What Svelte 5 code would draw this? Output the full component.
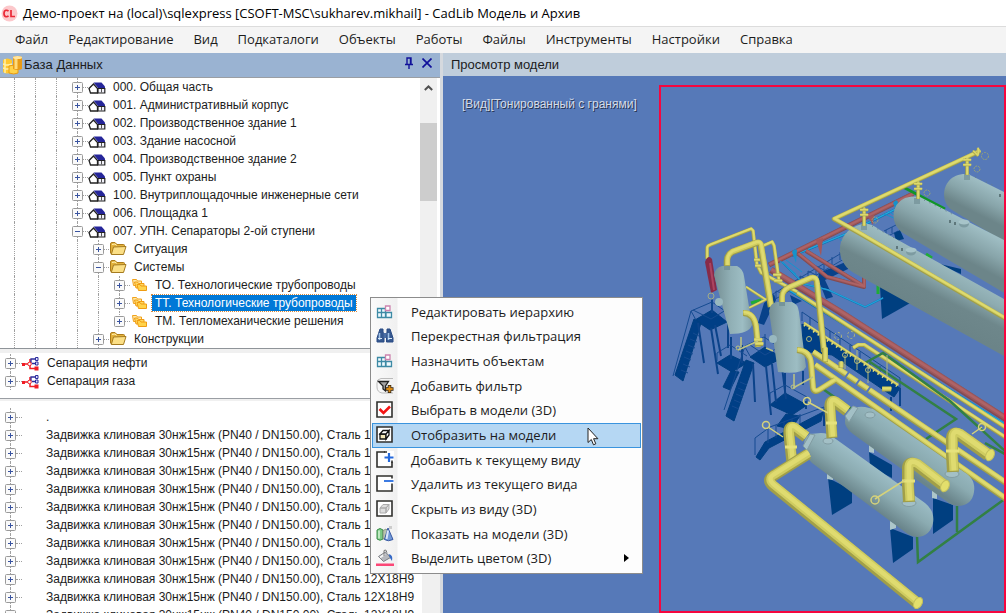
<script>
  const menus = ['Файл', 'Редактирование', 'Вид', 'Подкаталоги', 'Объекты', 'Работы', 'Файлы', 'Инструменты', 'Настройки', 'Справка'];

  const house = (text, open = false) => ({ text, icon: 'house', guides: 3, open });
  const tree = [
    house('000. Общая часть'),
    house('001. Административный корпус'),
    house('002. Производственное здание 1'),
    house('003. Здание насосной'),
    house('004. Производственное здание 2'),
    house('005. Пункт охраны'),
    house('100. Внутриплощадочные инженерные сети'),
    house('006. Площадка 1'),
    house('007. УПН. Сепараторы 2-ой ступени', true),
    { text: 'Ситуация', icon: 'folder', guides: 4 },
    { text: 'Системы', icon: 'folder', guides: 4, open: true },
    { text: 'ТО. Технологические трубопроводы', icon: 'stack', guides: 5 },
    { text: 'ТТ. Технологические трубопроводы', icon: 'stack', guides: 5, selected: true },
    { text: 'ТМ. Тепломеханические решения', icon: 'stack', guides: 5, last: true },
    { text: 'Конструкции', icon: 'folder', guides: 4 }
  ];
  const systems = ['Сепарация нефти', 'Сепарация газа'];
  const valve = 'Задвижка клиновая 30нж15нж (PN40 / DN150.00), Сталь 12Х18Н9';
  const parts = ['.', ...Array(11).fill(valve)];

  const actions = [
    ['grid', 'Редактировать иерархию'],
    ['binoculars', 'Перекрестная фильтрация'],
    ['grid', 'Назначить объектам'],
    ['filter', 'Добавить фильтр'],
    ['check', 'Выбрать в модели (3D)'],
    ['cube', 'Отобразить на модели'],
    ['plus', 'Добавить к текущему виду'],
    ['minus', 'Удалить из текущего вида'],
    ['ghost', 'Скрыть из виду (3D)'],
    ['shapes', 'Показать на модели (3D)'],
    ['bucket', 'Выделить цветом (3D)']
  ];
  const active = 'cube';

  const tones = {
    yellow: ['#a19f48', '#cfcc60', '#dfdb70'],
    red: ['#844a50', '#9c585c', '#ae6366'],
    cyan: ['#0d6fae', '#1593cf', '#2aa9dc'],
    green: ['#256e36', '#3a8244', '#4a9150']
  };
</script>

{#snippet pipe(d, w, tone = 'yellow')}
  <g fill="none" stroke-linejoin="round">
    <path {d} stroke={tones[tone][0]} stroke-width={w} />
    <path {d} stroke={tones[tone][1]} stroke-width={w * 0.75} transform="translate({w * 0.08} {-w * 0.1})" />
    <path {d} stroke={tones[tone][2]} stroke-width={w * 0.4} transform="translate({w * 0.08} {-w * 0.14})" />
  </g>
{/snippet}

{#snippet glyph(name)}
  <svg class="glyph" viewBox="0 0 18 18" aria-hidden="true">
    {#if name === 'house'}
      <path d="M1 10.500 5.500 6l4 4.500V15H2.500z" fill="#fff" stroke="#222" stroke-width="1.300" />
      <path d="M5.500 4.500h8L17 8.500v2h-6.500z" fill="#26269a" />
      <path d="M10 10.500h6.800V15H10z" fill="#f2f2fa" stroke="#222" stroke-width="1.200" />
      <path d="M13.500 11v3.500" stroke="#555" />
    {:else if name === 'folder'}
      <path d="M1.500 13V4q0-1.500 1.500-1.500h3L8 4.500h6.500q1 0 1 1V8L14 14H2.500z" fill="#e3b23c" stroke="#ad7c1b" />
      <path d="m4.500 7 12.500-.5-2.500 8H2.300z" fill="#fbdf86" stroke="#a57b20" />
      <path d="m3 4.500 3-.5 1.500 1.500" fill="none" stroke="#fff0b0" />
    {:else if name === 'stack'}
      <path d="M2.500 3.500h4l1 1.500h4v4.500h-8z" fill="#ffe9a8" stroke="#f0a21c" />
      <path d="M4.500 6h3l1 1.500H14v4.500H6z" fill="#ffd860" stroke="#f09c14" />
      <path d="M7 8.500h3l1 1.500h5.500v4.500H8.500z" fill="#ffd34b" stroke="#ef9c12" />
    {:else if name === 'nodes'}
      <path d="M1 10h7M8 5v9.500h5" fill="none" stroke="#f01c24" stroke-width="1.500" />
      <path d="M9 9V5h4M10 9.500h4" fill="none" stroke="#2c2c9c" stroke-width="1.300" />
      <path d="M0 9h3v3H0zM12.500 12.500h4v4h-4z" fill="#f01c24" />
      <circle cx="7.500" cy="10" r="1.800" fill="#fff" stroke="#f01c24" />
      <path d="M13.500 3.500h2.500v3h-2.500zM13.500 8h2.500v3h-2.500z" fill="#dfe1ff" stroke="#2c2c9c" />
    {:else if name === 'grid'}
      <path d="M1.500 5.500h8v9h-8zM1.500 9.500h14v5h-14M5.500 5.500v9M10 9.500v5" fill="#effaff" stroke="#3d8aa5" stroke-width="1.300" />
      <path d="M9.500 3h4.500v4.500H9.500z" fill="#fff" stroke="#cc83ae" stroke-width="1.300" />
    {:else if name === 'binoculars'}
      <path d="M4 2h3v3l1 2.500V15H1v-4zM11 2h3l3 9v4h-6.500V7.500L11 5z" fill="#36588f" stroke="#294a84" />
      <path d="M7.500 6h3v5h-3z" fill="#4b6ea4" />
      <path d="M3.500 6v7M12.500 6v7" stroke="#9fc1e8" stroke-width="1.600" />
      <path d="M2 11.500h4M12 11.500h4" stroke="#dcebfa" />
    {:else if name === 'filter'}
      <path d="M17 1.500H5Q1 2 1 6v4q0 5 5 6h11" fill="none" stroke="#bbb" />
      <path d="M2.500 4.500h10L9.500 9v5L7 12V9z" fill="#a4a4a4" stroke="#222" stroke-width="1.300" />
      <path d="M13.500 8v8M9.500 12h8" stroke="#322413" stroke-width="3.500" />
      <path d="M13.500 8.800v6.400M10.300 12h6.400" stroke="#d98913" stroke-width="2" />
    {:else if name === 'shapes'}
      <path d="M1 5q3-3 6 0v9q-3 2.500-6 0z" fill="#7bc985" stroke="#3c8e4b" />
      <path d="M3 5.500v8" stroke="#d4f5d4" stroke-width="1.500" />
      <path d="M7 5.500 10 4l2 2-3 8H7z" fill="#b9c4ae" stroke="#74816e" stroke-width=".7" />
      <path d="m12 3 5 11.500q-5 2.500-8.500 0z" fill="#7199d8" stroke="#3858a2" />
      <path d="m12 5.500-1.500 8.500" stroke="#dce9fb" stroke-width="2" />
      <path d="M13 1h3v3h-3z" fill="#ccc" />
    {:else if name === 'bucket'}
      <path d="m2.500 7.500 7-4.500 5 5.500-7 4z" fill="#b6b8bd" stroke="#797c82" />
      <path d="M4 8.500 9 5" stroke="#f6f6f6" stroke-width="2" />
      <path d="M8 7V1.500q2-2 3 2" fill="none" stroke="#777" />
      <path d="M12.500 5q5 1 3.500 7l-2-3z" fill="#3569c5" />
      <path d="M0 14.500h18v2.500H0z" fill="#fb4776" />
    {:else}
      <path d="M1 1h15v15H1z" fill="#fff" stroke="#30302d" stroke-width="1.600" />
      {#if name === 'check'}
        <path d="m3.500 8 4 4L14 5.500" fill="none" stroke="#f41414" stroke-width="2.600" />
      {:else if name === 'cube'}
        <path d="M4 8h6v5H4z" fill="#f2e7b8" stroke="#111" stroke-width="1.300" />
        <path d="m4 8 3-3.500h6L10 8zM10 8l3-3.500V9l-3 4z" fill="#fff" stroke="#111" stroke-width="1.300" />
      {:else if name === 'ghost'}
        <path d="M4 8h6v5H4zM4 8l3-3.500h6L10 8zM10 8l3-3.500V9l-3 4z" fill="#ddd" stroke="#aaa" />
      {:else if name === 'plus'}
        <path d="M9 0h9v11H9z" fill="#fff" /><path d="M8 1h3M16 12V9.500" stroke="#30302d" stroke-width="1.600" />
        <path d="M8.500 6.500h9M13 2v9" stroke="#2469dc" stroke-width="2.200" />
      {:else if name === 'minus'}
        <path d="M8.500 3.500h9.500v5H8.500z" fill="#fff" /><path d="M8 6h9.500" stroke="#3d7be2" stroke-width="2" />
      {/if}
    {/if}
  </svg>
{/snippet}

{#snippet expander(label, open)}
  <button class="expander" aria-label={label} aria-expanded={open}>
    <svg viewBox="0 0 11 11" width="11" height="11" aria-hidden="true">
      <rect x=".5" y=".5" width="10" height="10" rx="1" fill="#fafafa" stroke="#9a9a9a" />
      <path d={open ? 'M3 5.500h5' : 'M3 5.500h5M5.500 3v5'} stroke="#3a54a0" />
    </svg>
  </button>
{/snippet}

<div class="app">
  <header class="title">
    <svg width="17" height="17" viewBox="0 0 17 17" aria-hidden="true">
      <circle cx="8.500" cy="8.500" r="8" fill="#fcc8cb" />
      <path d="M7.500 6.300Q6.500 5 4.800 5.300 3 5.800 3 8.500t1.800 3.200q1.700.3 2.700-1M10 5v6.500h4" fill="none" stroke="#ea2836" stroke-width="1.700" />
    </svg>
    <span>Демо-проект на (local)\sqlexpress [CSOFT-MSC\sukharev.mikhail] - CadLib Модель и Архив</span>
  </header>

  <nav class="menubar">
    {#each menus as item}<button>{item}</button>{/each}
  </nav>

  <div class="panes">
    <aside class="database">
      <div class="bar">
        <svg width="20" height="20" viewBox="0 0 20 20" aria-hidden="true">
          <path d="M0 5q4-3 9 0v12q-5 3-9 0z" fill="#ffc72e" />
          <path d="M0 9q4 2 9 0M0 13q4 2 9 0M2 4v14" fill="none" stroke="#fff0a8" stroke-width="1.500" />
          <path d="M6 11q6-2 9 0v7q-4 2-9 0z" fill="#ffd34a" stroke="#e89a10" />
          <path d="M10 2q5-2 9 0v12q-4 2-9 0z" fill="#e99b16" />
          <path d="M13 3v11" stroke="#ffda79" stroke-width="3" />
          <ellipse cx="14.500" cy="2.500" rx="4.500" ry="1.500" fill="#ffe5a0" />
        </svg>
        <h2>База Данных</h2>
        <button class="tool" aria-label="Закрепить">
          <svg width="10" height="12" viewBox="0 0 10 12"><path d="M3 7V1h4v6M6.500 1v6M1 7.500h8M5 8v4" fill="none" stroke="#10109a" stroke-width="1.400" /></svg>
        </button>
        <button class="tool" aria-label="Закрыть">
          <svg width="10" height="10" viewBox="0 0 10 10"><path d="m.5.5 9 9M9.500.5l-9 9" stroke="#10109a" stroke-width="1.700" /></svg>
        </button>
      </div>

      <section class="hierarchy">
        <ul>
          {#each tree as row}
            <li>
              {#each Array(row.guides) as _}
                <i class="guide"></i>
              {/each}
              <span class={['cell', row.last && 'last']}>{@render expander(row.text, !!row.open)}</span>
              {@render glyph(row.icon)}
              <span class={['text', row.selected && 'selected']}>{row.text}</span>
            </li>
          {/each}
        </ul>
        <div class="scroll">
          <button aria-label="Вверх"><svg width="9" height="6" viewBox="0 0 9 6"><path d="m.8 5 3.700-3.500L8.200 5" fill="none" stroke="#505050" stroke-width="2" /></svg></button>
          <div class="thumb"></div>
        </div>
      </section>

      <section class="systems">
        <ul>
          {#each systems as text}
            <li><span class="cell">{@render expander(text, false)}</span>{@render glyph('nodes')}<span class="text">{text}</span></li>
          {/each}
        </ul>
      </section>

      <section class="parts">
        <ul>
          {#each parts as text}
            <li><span class="cell">{@render expander(text, false)}</span><span class="text">{text}</span></li>
          {/each}
        </ul>
        <div class="scroll"></div>
      </section>
    </aside>

    <main>
      <div class="bar"><h2>Просмотр модели</h2></div>
      <div class="viewport">
        <p>[Вид][Тонированный с гранями]</p>
        <div class="frame">
          <svg viewBox="661 87 343 524" preserveAspectRatio="xMinYMin slice" aria-hidden="true">
            <defs>
              <linearGradient id="tank" gradientUnits="userSpaceOnUse" x1="930" y1="250" x2="904" y2="302">
                <stop offset="0" stop-color="#a0bfc5" /><stop offset=".35" stop-color="#8dabb0" /><stop offset=".65" stop-color="#6e878b" /><stop offset="1" stop-color="#6b8488" />
              </linearGradient>
              <linearGradient id="tankB" gradientUnits="userSpaceOnUse" x1="950" y1="212" x2="928" y2="254">
                <stop offset="0" stop-color="#a0bfc5" /><stop offset=".4" stop-color="#88a5aa" /><stop offset=".75" stop-color="#6c8589" />
              </linearGradient>
              <linearGradient id="tankC" gradientUnits="userSpaceOnUse" x1="985" y1="182" x2="966" y2="220">
                <stop offset="0" stop-color="#a0bfc5" /><stop offset=".4" stop-color="#88a5aa" /><stop offset=".75" stop-color="#6c8589" />
              </linearGradient>
              <linearGradient id="drum" gradientUnits="userSpaceOnUse" x1="915" y1="436" x2="893" y2="468">
                <stop offset="0" stop-color="#97b8c0" /><stop offset=".4" stop-color="#8babb1" /><stop offset=".85" stop-color="#6a858b" />
              </linearGradient>
              <linearGradient id="drumQ" gradientUnits="userSpaceOnUse" x1="875" y1="468" x2="852" y2="501">
                <stop offset="0" stop-color="#9bbcc4" /><stop offset=".4" stop-color="#8babb1" /><stop offset=".85" stop-color="#6a858b" />
              </linearGradient>
              <linearGradient id="column">
                <stop offset="0" stop-color="#748e93" /><stop offset=".45" stop-color="#91b0b6" /><stop offset=".75" stop-color="#9dbdc3" /><stop offset="1" stop-color="#84a1a7" />
              </linearGradient>
            </defs>

            <!-- pipe rack behind the tanks -->
            <g fill="none" stroke="#1c4f95" stroke-width="1">
              <path d="M768 297 845 251M772 301l72-42M776 298v-7m8 3v-8m8 4v-9m8 4v-9m8 4v-9m8 4v-9m8 4v-8m8 3v-8m8 3v-8M776 291l8 3m0-8 8 4m0-9 8 4m0-9 8 4m0-9 8 4m0-9 8 4m0-8 8 3M884 238l14-7m-14 0 14-7m-12 12v-6m6 3v-6" />
            </g>
            <path d="m819 273 29-12v8l-23 11 8 17-7 2-8-20zM790 295l12 6-9 4zM764 303l10-9 2 6-12 25-6-2z" fill="#08428a" />
            <path d="m880 287 19 1 13 14-30 17z" fill="#003f80" />
            <path d="m940 264 21 5v5l-20-9zM894 233l6-3 4 9-8 2z" fill="#003f80" />
            {@render pipe('M782 262l22 22 24 6 37 17 18-9', 1.6, 'cyan')}
            {@render pipe('M792 256l54-22 52-26', 2.2, 'cyan')}
            {@render pipe('M797 253l30 24 37 10v-13M806 251l57 35', 4, 'red')}
            {@render pipe('M769 265 913 194', 5, 'red')}
            <path d="M816 240l7-2-2 18zM868 217l6-2-1 10z" fill="#a3575a" />
            <path d="M792 252q2-4 5-2l-1 13zM893 203q3-5 5-1l-2 8z" fill="#1492cb" />
            <path d="M780 261l16 13M786 260l16 12M838 238l8 6M884 214l10 4M888 211l8 5" stroke="#1593cf" fill="none" />
            <path d="M903 187l42 22" stroke="#119528" stroke-width="3" />
            <path d="M878 282v12M926 254l6 4M751 303l10-3" stroke="#20ac36" stroke-width="3" />
            {@render pipe('M771 270l69 42 166 107', 6.5, 'red')}
            {@render pipe('M790 291 1006 425', 2.4, 'cyan')}

            <!-- storage tanks -->
            <path d="M968 174 1006 193v50l-54-33c-14-9-10-38 16-36z" fill="url(#tankC)" />
            <path d="M920 197 1006 241v53l-103-61c-17-11-11-41 17-36z" fill="url(#tankB)" />
            <path d="M862 224q7-2 18 6L1006 300v57L854 273c-20-11-20-42 8-49z" fill="url(#tank)" />
            <g fill="#7d9ba1">
              <ellipse cx="911" cy="252" rx="5" ry="3.500" /><ellipse cx="964" cy="224" rx="5" ry="3.500" />
              <ellipse cx="911" cy="250" rx="5.500" ry="2.500" fill="#a7c4c9" /><ellipse cx="964" cy="222" rx="5.500" ry="2.500" fill="#a7c4c9" />
              <path d="M861 224h6v6h-6zM914 198h6v6h-6zM964 174h6v6h-6z" />
            </g>
            <path d="M897 246v3m5-1v3m48-31v3m5-1v3m45-31v3" stroke="#5e777b" stroke-width="2" />
            <g stroke="#66808a" stroke-dasharray="1 5"><path d="M872 226l28 15M924 200l28 14M975 177l20 9" /></g>
            {@render pipe('M980 151 834 219l25 14 147 86', 4.500)}
            {@render pipe('M864 208v18M918 182v17M967 158v17', 3.500)}
            {@render pipe('M860 210h8M860 215h8M914 184h8M914 189h8M963 160h8M963 165h8M973 151l5 5M978 148v7', 2.500)}
            <g fill="none" stroke="#97a477"><circle cx="985" cy="156" r="3.500" stroke-dasharray="2 1" /><circle cx="977" cy="169" r="3" stroke-dasharray="2 1" /><circle cx="927" cy="193" r="3" stroke-dasharray="2 1" /><circle cx="875" cy="220" r="3" stroke-dasharray="2 1" /></g>

            <!-- stairs and service platforms -->
            <g fill="#003f86" stroke="#003f80">
              <path d="m695 320 17-10 15 12-17 8zM750 357l15-10 17 11-17 9zM717 363l13-8 17 8-15 9zM770 405l15-12 22 12-15 10zM802 324l98 64-6 9-62-42-29-4z" />
              <path d="m694 319-19 56 8 6 18-58zM746 360l-20 56 8 5 20-58zM731 371l-8 16 7 3 9-18zM765 442l58-30-2 9-52 27-9 12-4-3z" />
              <path d="m786 414-9 12 14 3 9-13z" />
            </g>
            <g fill="none" stroke="#0b438a" stroke-width="2">
              <path d="M711 328l7 46M698 323l6 40M715 325l6 31M728 322v26M766 366l5 49M772 364l4 38M753 364l2 38M781 359l5 40M785 373v22M803 371v14M891 397v14M900 388v18M806 401v8M824 409v17M731 337v22M742 345v18M712 300v13" />
            </g>
            <g fill="none" stroke="#154b91" stroke-width="1">
              <path d="M673 376l18-65 21-9 16 11v9M691 311l5 9M712 298v12M681 370l7 3m-5-9 7 3m-6-10 7 3m-5-9 7 3m-5-9 7 3m-5-9 7 3m-4-9 6 3M724 410l21-64 19-9 18 12v10M745 347l5 9M765 334v13M732 406l7 3m-5-9 7 3m-5-9 7 3m-5-9 7 3m-5-9 7 3M717 361v-8l13-8 17 11M770 403v-10l15-8 22 12v8M755 455v-17l15-11 54-20v8M802 321v-9l98 66v10M810 327v-10m10 17v-10m10 17v-10m10 17v-10m10 17v-10m10 17v-10m10 17v-10m10 17v-10M693 310l18 9 15-9M750 345l15 10 16-9M768 428v15m8-18v13m8-16v12m8-15v10m8-15v10" />
            </g>

            <!-- process lines -->
            {@render pipe('M797 293 1006 428', 4)}
            {@render pipe('M853 348l5-3 6 0 142 93', 4)}
            <g fill="none" stroke="#328044" stroke-width="2.500"><path d="M865 363l18-10 67 48 56 51M870 362l86 57-30 20M820 387l33 23M957 506v26M917 536l1 26 88-64M985 443l20 11" /></g>
            {@render pipe('M746 287l20 13M749 308l18-9M804 323l94 62', 2.5)}
            {@render pipe('M813 352 1006 483', 6)}
            <path d="M849 372l-5 7M860 379l-5 7M871 386l-5 7" stroke="#5679b8" stroke-width="2" />
            {@render pipe('M841 362v6M882 389h9', 5)}
            {@render pipe('M815 365 1006 499', 6)}
            <path d="M804 325l93 61" stroke="#e2de79" stroke-width="2.500" stroke-dasharray="1.500 4" />
            <g fill="none" stroke="#b3b878"><path d="M845 355v14M857 350v20M868 365v18M887 355v22" /><circle cx="845" cy="355" r="2.500" /><circle cx="857" cy="361" r="2.500" /><circle cx="868" cy="370" r="2.500" /><circle cx="838" cy="336" r="3.500" stroke-dasharray="2 2" /><circle cx="851" cy="335" r="3.500" stroke-dasharray="2 2" /><circle cx="809" cy="339" r="2.500" /></g>

            <!-- vertical columns -->
            {@render pipe('M707 259v-11q0-2 3-3l41-16 2 2 4 36', 3.500)}
            {@render pipe('M763 246l9-4 2 4 5 36M758 267l3 6 36 19', 3.500)}
            {@render pipe('M754 260h7M755 266h7M773 275h8M774 281h8', 3)}
            <path d="M705 262q3-8 7-3l5 31-6 3z" fill="#872b48" /><path d="M710 263l4 27" stroke="#ac4460" stroke-width="2" />
            <path d="M714 275q1-7 8-9h15q6 3 7 10l8 49q-3 9-22 9z" fill="url(#column)" />
            <path d="M724 270h6v-4h-6z" fill="#75949a" />
            {@render pipe('M727 266v-5q0-6 5-9l24-9q5-1 5 4l10 60', 6.500)}
            <circle cx="719" cy="302" r="4" fill="#98b8bf" />
            <path d="M769 311q1-8 8-9h15q6 2 7 10l7 55q-4 8-28 5z" fill="url(#column)" />
            {@render pipe('M782 303v-6q0-6 6-9l23-10q6-1 6 6l7 68', 6)}
            <path d="M779 302h6v4h-6z" fill="#75949a" />
            <circle cx="773" cy="339" r="4" fill="#98b8bf" />
            {@render pipe('M743 313q11 0 13 14l2 20', 6)}
            {@render pipe('M797 350q13 1 14 14l2 24q1 5 6 2l16-10', 6)}
            {@render pipe('M754 340h8M755 344h8', 4)}
            {@render pipe('M825 348v14', 6)}
            <path d="M766 348l7 3M738 350l20-9M793 388l20-11M741 337v10M794 374v14" stroke="#bec483" stroke-width="1.500" />
            <circle cx="738" cy="348" r="2" fill="none" stroke="#bec483" /><circle cx="793" cy="387" r="2" fill="none" stroke="#bec483" />
            <circle cx="711" cy="296" r="3" fill="none" stroke="#a2ac86" />

            <!-- separator drums -->
            <path d="m828 478 24 12v13l-20 12zM890 528l23 9v12l-20 14zM869 452l23 13v13l-22-11zM933 498l20 7v15l-20 14z" fill="#003f80" />
            <path d="M827 471l6 3v6l-6-1zM890 521l6 3v4l-6 2zM869 444l5 4v5l-5-1zM932 490l5 3v6l-5-1z" fill="#adc6ca" />
            <path d="M845 420q3-15 20-13l8 2 91 63q12 7 10 20-2 13-15 14-7 0-13-5l-93-67q-9-7-8-14z" fill="url(#drum)" />
            <path d="M805 448q-3-9 5-14l11-1q7 0 12 4l92 66q10 8 8 20-3 13-15 14-7 0-13-5l-93-69q-6-5-7-15z" fill="url(#drumQ)" />
            <g fill="#a3c0c6" stroke="#829da3"><path d="M845 416l8-10 5 2-9 14zM803 446l7-12 5 1-8 15z" /><ellipse cx="870" cy="415" rx="5" ry="3" /><ellipse cx="828" cy="441" rx="5" ry="3" /><ellipse cx="952" cy="474" rx="7" ry="3.500" /><ellipse cx="909" cy="503" rx="7" ry="3.500" /></g>
            {@render pipe('M847 411l-12-9q-6-3-5 7l2 29', 11)}
            {@render pipe('M806 437l-12-9q-6-3-5 7l3 28', 11)}
            {@render pipe('M808 454l-35 22q-7 4 0 10L917 603', 11)}
            {@render pipe('M943 485l-26-20q-10-5-9 6v14l1 17', 12)}
            {@render pipe('M988 455l-28-20q-9-5-8 6v14l1 17', 12)}
            <g fill="#e3df6c" stroke="#c3c05c"><ellipse cx="945" cy="486" rx="4" ry="6" transform="rotate(25 945 486)" /><ellipse cx="990" cy="455" rx="4" ry="6" transform="rotate(25 990 455)" /><ellipse cx="918" cy="603" rx="4" ry="6" transform="rotate(30 918 603)" /></g>
            <path d="M902 481h13M946 451h13M826 423h11M785 447h12" stroke="#e6e27c" stroke-width="3" />
            <g fill="none" stroke="#d5d27b" stroke-width="1.500"><path d="M875 499l30-19M768 427l15 10M808 402l20 11M982 427l-10 7" /><circle cx="875" cy="500" r="4" /><circle cx="766" cy="425" r="3.500" /><circle cx="807" cy="401" r="3.500" /><circle cx="982" cy="427" r="3.500" /></g>
          </svg>
        </div>
      </div>
    </main>
  </div>

  <div class="context" role="menu">
    {#each actions as [icon, text]}
      <button role="menuitem" class={{ active: icon === active }}>
        {@render glyph(icon)}
        <span>{text}</span>
        {#if icon === 'bucket'}<svg width="5" height="8" viewBox="0 0 5 8"><path d="m0 0 5 4-5 4z" /></svg>{/if}
      </button>
    {/each}
  </div>
  <svg class="pointer" width="12" height="19" viewBox="0 0 12 19" aria-hidden="true">
    <path d="M1 1v14.500l3.300-3 2.200 5.300 2.300-1-2.200-5.100h4.300z" fill="#fff" stroke="#222" />
  </svg>
</div>

<style>
  :global(body) { margin: 0; }
  * { box-sizing: border-box; }
  .app {
    position: relative;
    display: flex;
    flex-direction: column;
    height: 100vh;
    overflow: hidden;
    background: #d5d9de;
    color: #1c1c1c;
    font: 13px/18px "Liberation Sans", Arial, sans-serif;
  }
  button { margin: 0; padding: 0; border: 0; background: none; color: inherit; font: inherit; }
  ul, p, h2 { margin: 0; padding: 0; list-style: none; }
  svg { display: block; flex: none; }

  .title {
    display: flex;
    flex: none;
    align-items: center;
    gap: 5px;
    height: 27px;
    padding-left: 1px;
    border-bottom: 1px solid #dcdcdc;
    background: #fff;
    color: #000;
    font: 13px/20px "Open Sans", sans-serif;
    white-space: nowrap;
  }
  .menubar {
    display: flex;
    flex: none;
    height: 26px;
    padding-left: 5px;
    background: #f4f4f4;
    font: 13px/20px "Open Sans", sans-serif;
  }
  .menubar button { padding: 0 10px 2px; }

  .panes { display: flex; flex: 1; gap: 3px; min-height: 0; }
  .database { display: flex; flex: none; flex-direction: column; width: 440px; background: #f0f0f0; }
  .bar { display: flex; flex: none; align-items: center; height: 24px; padding-left: 3px; background: #9ab3d2; }
  .bar h2 { flex: 1; font-size: 13px; font-weight: 400; }
  .bar svg + h2 { padding-left: 1px; }
  .tool { display: grid; place-items: center; width: 18px; height: 18px; margin-bottom: 4px; }
  .tool:last-child { margin-right: 4px; }

  .hierarchy, .systems, .parts { display: flex; overflow: hidden; background: #fff; font-size: 12px; }
  .hierarchy { flex: none; padding-right: 3px; border-bottom: 1px solid #8f9499; border-top: 1px solid #9a9ea3; }
  .systems { flex: none; height: 46px; margin-top: 4px; padding-top: 1px; border-bottom: 1px solid #9a9ea3; }
  .parts { flex: 1; margin-top: 2px; padding-top: 7px; }
  .hierarchy ul, .parts ul { flex: 1; overflow: hidden; }
  .hierarchy ul { padding-left: 4px; }
  li { display: flex; align-items: center; height: 18px; white-space: nowrap; }
  .glyph { width: 18px; height: 18px; }

  .guide, .cell { position: relative; flex: none; width: 21px; height: 18px; }
  .guide::before, .cell::before {
    content: "";
    position: absolute;
    inset: 0 auto 0 10px;
    border-left: 1px dotted #a0a0a0;
  }
  .guide:nth-of-type(5)::before { border-color: #a0a0a0; }
  .cell.last::before { bottom: 9px; }
  .cell::after {
    content: "";
    position: absolute;
    inset: 9px 0 auto 16px;
    border-top: 1px dotted #a0a0a0;
  }
  .expander { position: relative; display: block; padding: 4px 5px 3px; }
  .text { padding: 0 3px; margin-left: 4px; line-height: 16px; }
  .text.selected { background: #0078d7; outline: 1px dotted #d88a3c; color: #fff; }
  .systems .cell, .parts .cell { width: 22px; }
  .parts .text { margin-left: 21px; }

  .scroll { flex: none; width: 17px; background: #f0f0f0; }
  .scroll button { display: grid; place-items: center; width: 17px; height: 20px; }
  .thumb { height: 78px; margin-top: 25px; background: #cdcdcd; }
  .parts .scroll { width: 18px; margin-top: -7px; }

  main { display: flex; flex: 1; flex-direction: column; min-width: 0; }
  main .bar { height: 23px; padding-left: 8px; background: #bfcddb; }
  .viewport { display: flex; flex: 1; min-height: 0; gap: 15px; padding: 9px 0 0 19px; background: #5679b8; }
  .viewport p { flex: none; width: 182px; padding-top: 10px; color: #d4dbe8; text-shadow: 1px 1px 0 #26344f; font-size: 12px; white-space: nowrap; }
  .frame { flex: 1; min-width: 0; border: 2px solid #f5063f; overflow: hidden; }
  .frame svg { width: 100%; height: 100%; }

  .context {
    position: absolute;
    left: 370px;
    top: 297px;
    display: grid;
    grid-template-rows: repeat(11, 1fr);
    width: 273px;
    height: 277px;
    padding: 2px 1px;
    border: 1px solid #8c8c8c;
    background: linear-gradient(90deg, #fafafa 0, #f0f0f0 26px, #fdfdfd 27px);
    font: 13px/18px "Open Sans", sans-serif;
  }
  .context button { display: flex; align-items: center; gap: 17px; padding: 0 12px 1px 4px; text-align: left; }
  .context .active { padding: 0 12px 0 3px; border: 1px solid #3a94de; background: #b5d7f3; }
  .context span { flex: 1; white-space: nowrap; }
  .pointer { position: absolute; left: 587px; top: 427px; }
</style>
